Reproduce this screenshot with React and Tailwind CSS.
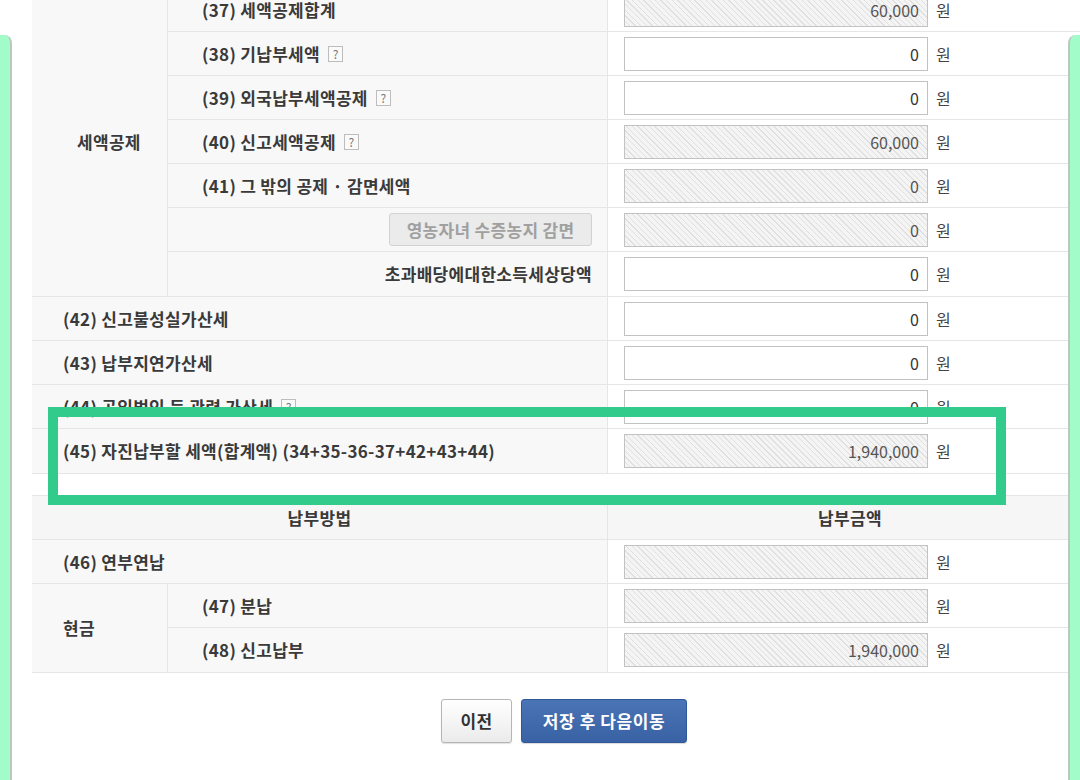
import React from "react";

const HATCH =
  "bg-[repeating-linear-gradient(45deg,#f4f4f4_0px,#f4f4f4_3px,#e0e0e0_3px,#e0e0e0_4px)] text-[#555]";

const LABEL = "text-[17px] tracking-[0.3px] font-bold text-[#3a3a3a]";

function Help() {
  return (
    <span className="ml-[8px] inline-flex h-[16px] w-[15px] items-center justify-center border border-[#bdbdbd] bg-[#fafafa] text-[12px] font-normal leading-none tracking-normal text-[#777]">
      ?
    </span>
  );
}

function Value({ value, disabled }) {
  return (
    <div className="flex flex-1 items-center bg-white pl-[16px]">
      <div
        className={
          "flex h-[34px] w-[304px] items-center justify-end border border-[#c2c2c2] pr-[8px] text-[16px] " +
          (disabled ? HATCH : "bg-white text-[#333]")
        }
      >
        {value}
      </div>
      <span className="ml-[8px] text-[16px] text-[#444]">원</span>
    </div>
  );
}

function SubRow({ label, help, value, disabled, right }) {
  return (
    <div className="flex h-[44px]">
      <div
        className={
          "flex w-[440px] items-center border-r border-[#e6e6e6] bg-[#f8f8f8] " +
          LABEL +
          " " +
          (right ? "justify-end pr-[15px]" : "pl-[34px]")
        }
      >
        {label}
        {help && <Help />}
      </div>
      <Value value={value} disabled={disabled} />
    </div>
  );
}

function FullRow({ label, help, value, disabled }) {
  return (
    <div className="flex h-[44px]">
      <div
        className={
          "flex w-[576px] items-center border-r border-[#e6e6e6] bg-[#f8f8f8] pl-[31px] " +
          LABEL
        }
      >
        {label}
        {help && <Help />}
      </div>
      <Value value={value} disabled={disabled} />
    </div>
  );
}

export default function App() {
  return (
    <div className="relative h-[780px] w-[1080px] overflow-hidden bg-white font-['Noto_Sans_CJK_KR','Noto_Sans',sans-serif]">
      <div className="-mt-[12px] ml-[32px] w-[1060px]">
        {/* table 1 */}
        <div className="flex flex-col divide-y divide-[#e6e6e6] border-b border-[#e6e6e6]">
          <div className="flex">
            <div
              className={
                "flex w-[136px] items-center border-r border-[#e6e6e6] bg-[#f8f8f8] pl-[45px] " +
                LABEL
              }
            >
              세액공제
            </div>
            <div className="flex flex-1 flex-col divide-y divide-[#e6e6e6]">
              <SubRow label="(37) 세액공제합계" value="60,000" disabled />
              <SubRow label="(38) 기납부세액" help value="0" />
              <SubRow label="(39) 외국납부세액공제" help value="0" />
              <SubRow label="(40) 신고세액공제" help value="60,000" disabled />
              <SubRow label="(41) 그 밖의 공제 · 감면세액" value="0" disabled />
              <SubRow
                right
                label={
                  <span className="flex h-[33px] w-[203px] items-center justify-center rounded-[3px] border border-[#d2d2d2] bg-[#ebebeb] text-[#a0a0a0]">
                    영농자녀 수증농지 감면
                  </span>
                }
                value="0"
                disabled
              />
              <SubRow right label="초과배당에대한소득세상당액" value="0" />
            </div>
          </div>
          <FullRow label="(42) 신고불성실가산세" value="0" />
          <FullRow label="(43) 납부지연가산세" value="0" />
          <FullRow label="(44) 공익법인 등 관련 가산세" help value="0" />
          <FullRow
            label="(45) 자진납부할 세액(합계액) (34+35-36-37+42+43+44)"
            value="1,940,000"
            disabled
          />
        </div>

        {/* table 2 */}
        <div className="mt-[21px] flex flex-col divide-y divide-[#e6e6e6] border-y border-[#e6e6e6]">
          <div className={"flex h-[44px] bg-[#f6f6f6] " + LABEL}>
            <div className="flex w-[576px] items-center justify-center border-r border-[#e6e6e6]">
              납부방법
            </div>
            <div className="flex flex-1 items-center justify-center">납부금액</div>
          </div>
          <FullRow label="(46) 연부연납" value="" disabled />
          <div className="flex h-[88px]">
            <div
              className={
                "flex w-[136px] items-center border-r border-[#e6e6e6] bg-[#f8f8f8] pl-[31px] " +
                LABEL
              }
            >
              현금
            </div>
            <div className="flex flex-1 flex-col divide-y divide-[#e6e6e6]">
              <SubRow label="(47) 분납" value="" disabled />
              <SubRow label="(48) 신고납부" value="1,940,000" disabled />
            </div>
          </div>
        </div>

        {/* buttons */}
        <div className="mt-[26px] flex justify-center gap-[9px] pl-[4px]">
          <button className="h-[44px] w-[71px] rounded-[3px] border border-[#b5b5b5] bg-[linear-gradient(#ffffff,#ebebeb)] text-[17px] font-bold tracking-[0.3px] text-[#333] shadow-[0_1px_1px_rgba(0,0,0,0.12)]">
            이전
          </button>
          <button className="h-[44px] w-[166px] rounded-[3px] border border-[#2f5898] bg-[linear-gradient(#4a74b6,#3962a4)] text-[17px] font-bold tracking-[0.6px] text-white shadow-[0_1px_1px_rgba(0,0,0,0.15)]">
            저장 후 다음이동
          </button>
        </div>
      </div>

      {/* highlight rectangle */}
      <div className="absolute left-[48px] top-[407px] h-[98px] w-[958px] border-[10px] border-[#33cb8b]" />

      {/* side edge bars */}
      <div className="absolute bottom-0 left-0 top-[35px] w-[12px] rounded-tr-[8px] border-r-2 border-[#bac9c0] bg-[#a2fcca]" />
      <div className="absolute bottom-0 left-[1068px] top-[35px] w-[12px] rounded-tl-[8px] border-l-2 border-[#bac9c0] bg-[#a2fcca]" />
    </div>
  );
}
